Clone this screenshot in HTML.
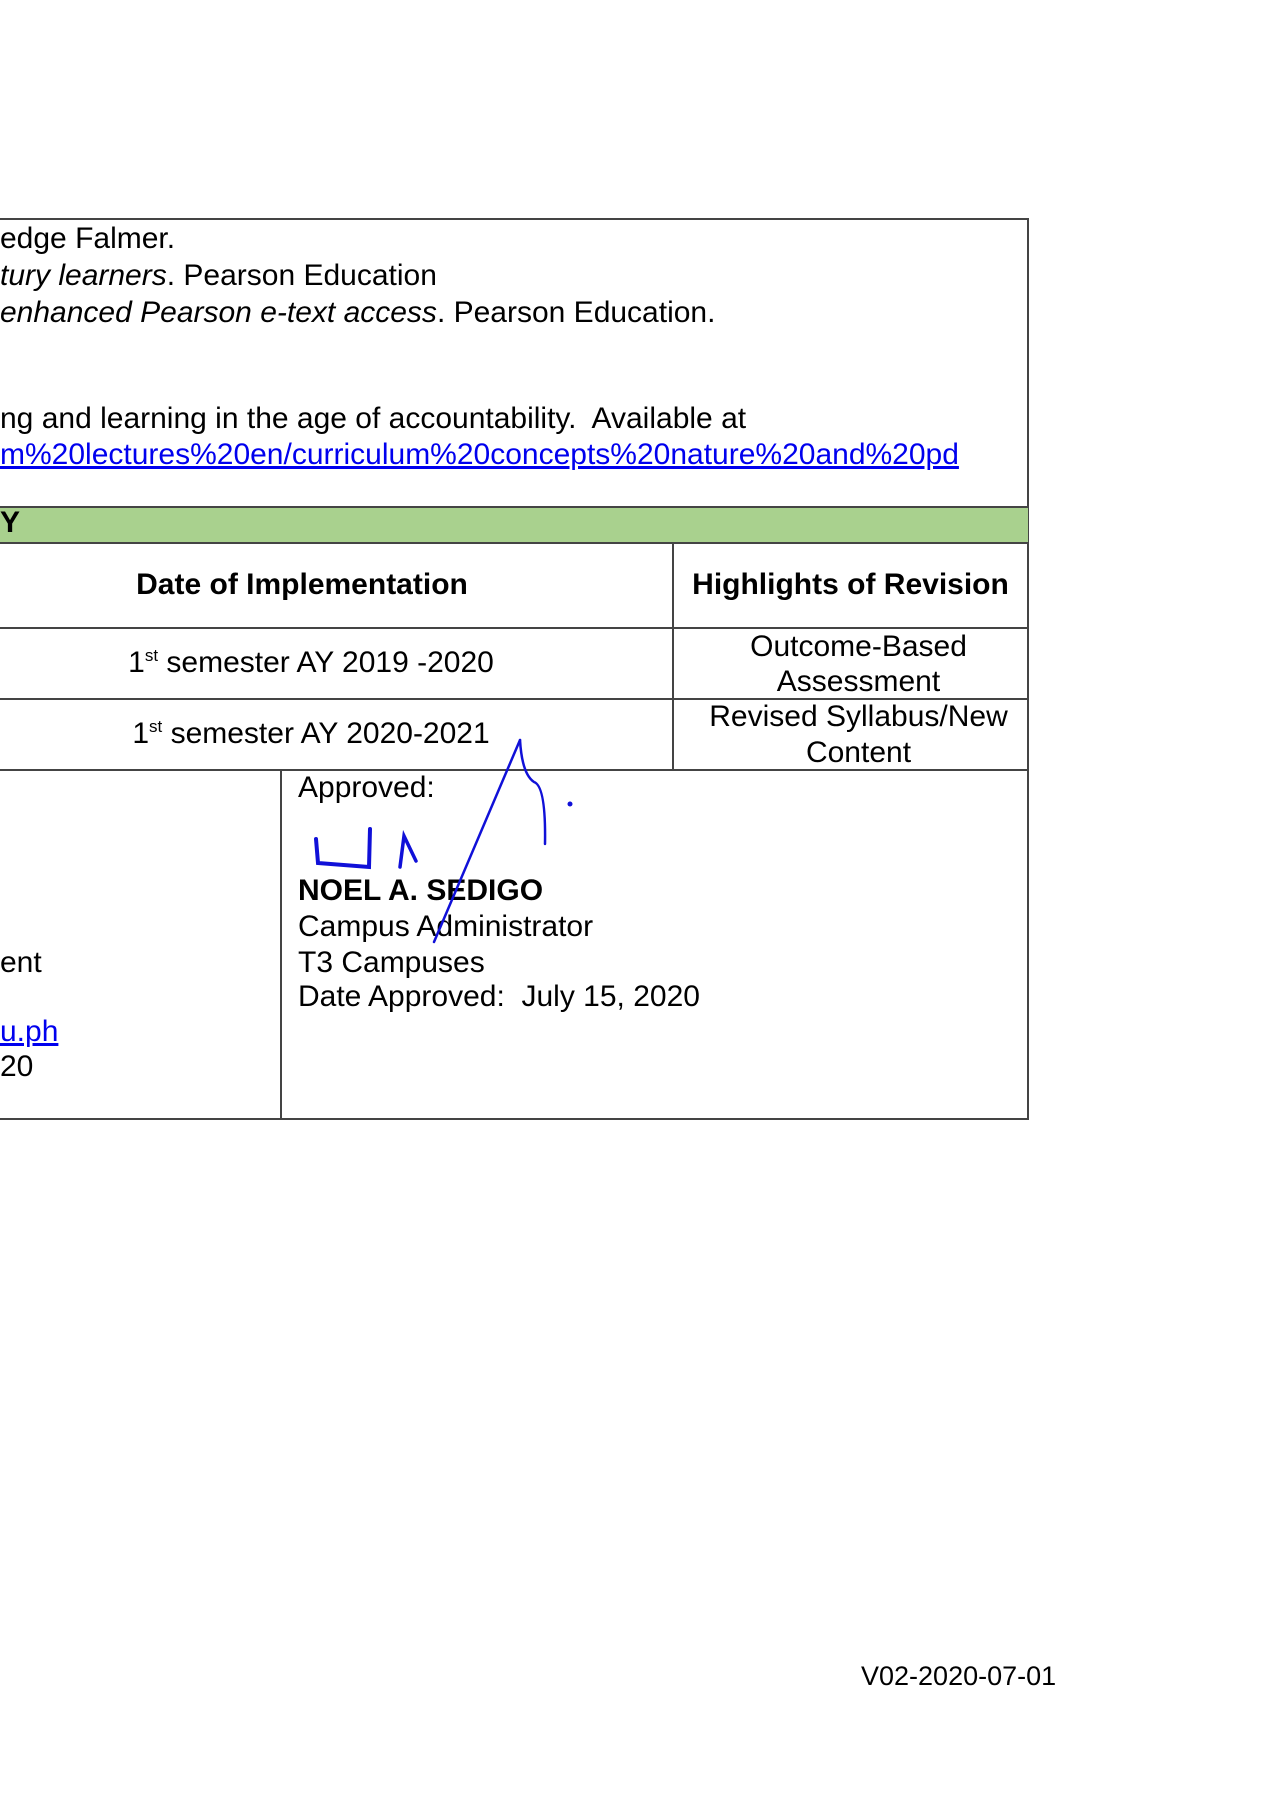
<!DOCTYPE html>
<html><head><meta charset="utf-8"><style>
body{margin:0;width:1273px;height:1800px;background:#fff;position:relative;overflow:hidden;font-family:"Liberation Sans",Arial,sans-serif;color:#000}
.t{position:absolute;font-size:30px;line-height:34px;white-space:nowrap}
.c{text-align:center}
.h{position:absolute;background:#444;height:1.5px}
.v{position:absolute;background:#444;width:1.5px}
a{color:#0000ee;text-decoration:underline}
sup{font-size:17px;line-height:0;vertical-align:11px}
</style></head><body>
<div class="h" style="left:0;top:218px;width:1029px"></div>
<div class="v" style="left:1027px;top:218px;height:901px"></div>
<div style="position:absolute;left:0;top:507px;width:1028px;height:35px;background:#a9d18e"></div>
<div class="h" style="left:0;top:506px;width:1029px"></div>
<div class="h" style="left:0;top:542px;width:1029px"></div>
<div class="h" style="left:0;top:627px;width:1029px"></div>
<div class="h" style="left:0;top:698px;width:1029px"></div>
<div class="h" style="left:0;top:769px;width:1029px"></div>
<div class="h" style="left:0;top:1118px;width:1029px"></div>
<div class="v" style="left:672px;top:542px;height:227px"></div>
<div class="v" style="left:280px;top:769px;height:350px"></div>

<div class="t" style="left:0;top:222px">edge Falmer.</div>
<div class="t" style="left:0;top:259px"><i>tury learners</i>. Pearson Education</div>
<div class="t" style="left:0;top:296px"><i>enhanced Pearson e-text access</i>. Pearson Education.</div>
<div class="t" style="left:0;top:402px">ng and learning in the age of accountability.&nbsp; Available at</div>
<div class="t" style="left:0;top:438px"><a>m%20lectures%20en/curriculum%20concepts%20nature%20and%20pd</a></div>
<div class="t" style="left:0;top:506px;font-weight:bold">Y</div>

<div class="t c" style="left:102px;width:400px;top:568px;font-weight:bold">Date of Implementation</div>
<div class="t c" style="left:673px;width:355px;top:568px;font-weight:bold">Highlights of Revision</div>
<div class="t c" style="left:111px;width:400px;top:646px">1<sup>st</sup> semester AY 2019 -2020</div>
<div class="t c" style="left:111px;width:400px;top:717px">1<sup>st</sup> semester AY 2020-2021</div>
<div class="t c" style="left:681px;width:355px;top:630px">Outcome-Based</div>
<div class="t c" style="left:681px;width:355px;top:665px">Assessment</div>
<div class="t c" style="left:681px;width:355px;top:700px">Revised Syllabus/New</div>
<div class="t c" style="left:681px;width:355px;top:736px">Content</div>

<div class="t" style="left:298px;top:771px">Approved:</div>
<div class="t" style="left:298px;top:874px;font-weight:bold">NOEL A. SEDIGO</div>
<div class="t" style="left:298px;top:910px">Campus Administrator</div>
<div class="t" style="left:298px;top:946px">T3 Campuses</div>
<div class="t" style="left:298px;top:980px">Date Approved:&nbsp; July 15, 2020</div>
<div class="t" style="left:0;top:946px">ent</div>
<div class="t" style="left:0;top:1015px"><a>u.ph</a></div>
<div class="t" style="left:0;top:1050px">20</div>

<svg style="position:absolute;left:0;top:0" width="1273" height="1800">
<g fill="none" stroke="#1010d8" stroke-width="2.5" stroke-linecap="round">
<path d="M520 740 L434 942"/>
<path d="M520 740 Q522 774 534 782 Q546 786 545 844"/>
<path d="M316 839 L318 863 L369 867 L370 829" stroke-width="4"/>
<path d="M400 867 L404 836 L416 861" stroke-width="3.5"/>
</g>
<circle cx="570" cy="804" r="2.5" fill="#1010d8"/>
</svg>

<div class="t" style="left:861px;top:1659px;font-size:27px">V02-2020-07-01</div>
</body></html>
